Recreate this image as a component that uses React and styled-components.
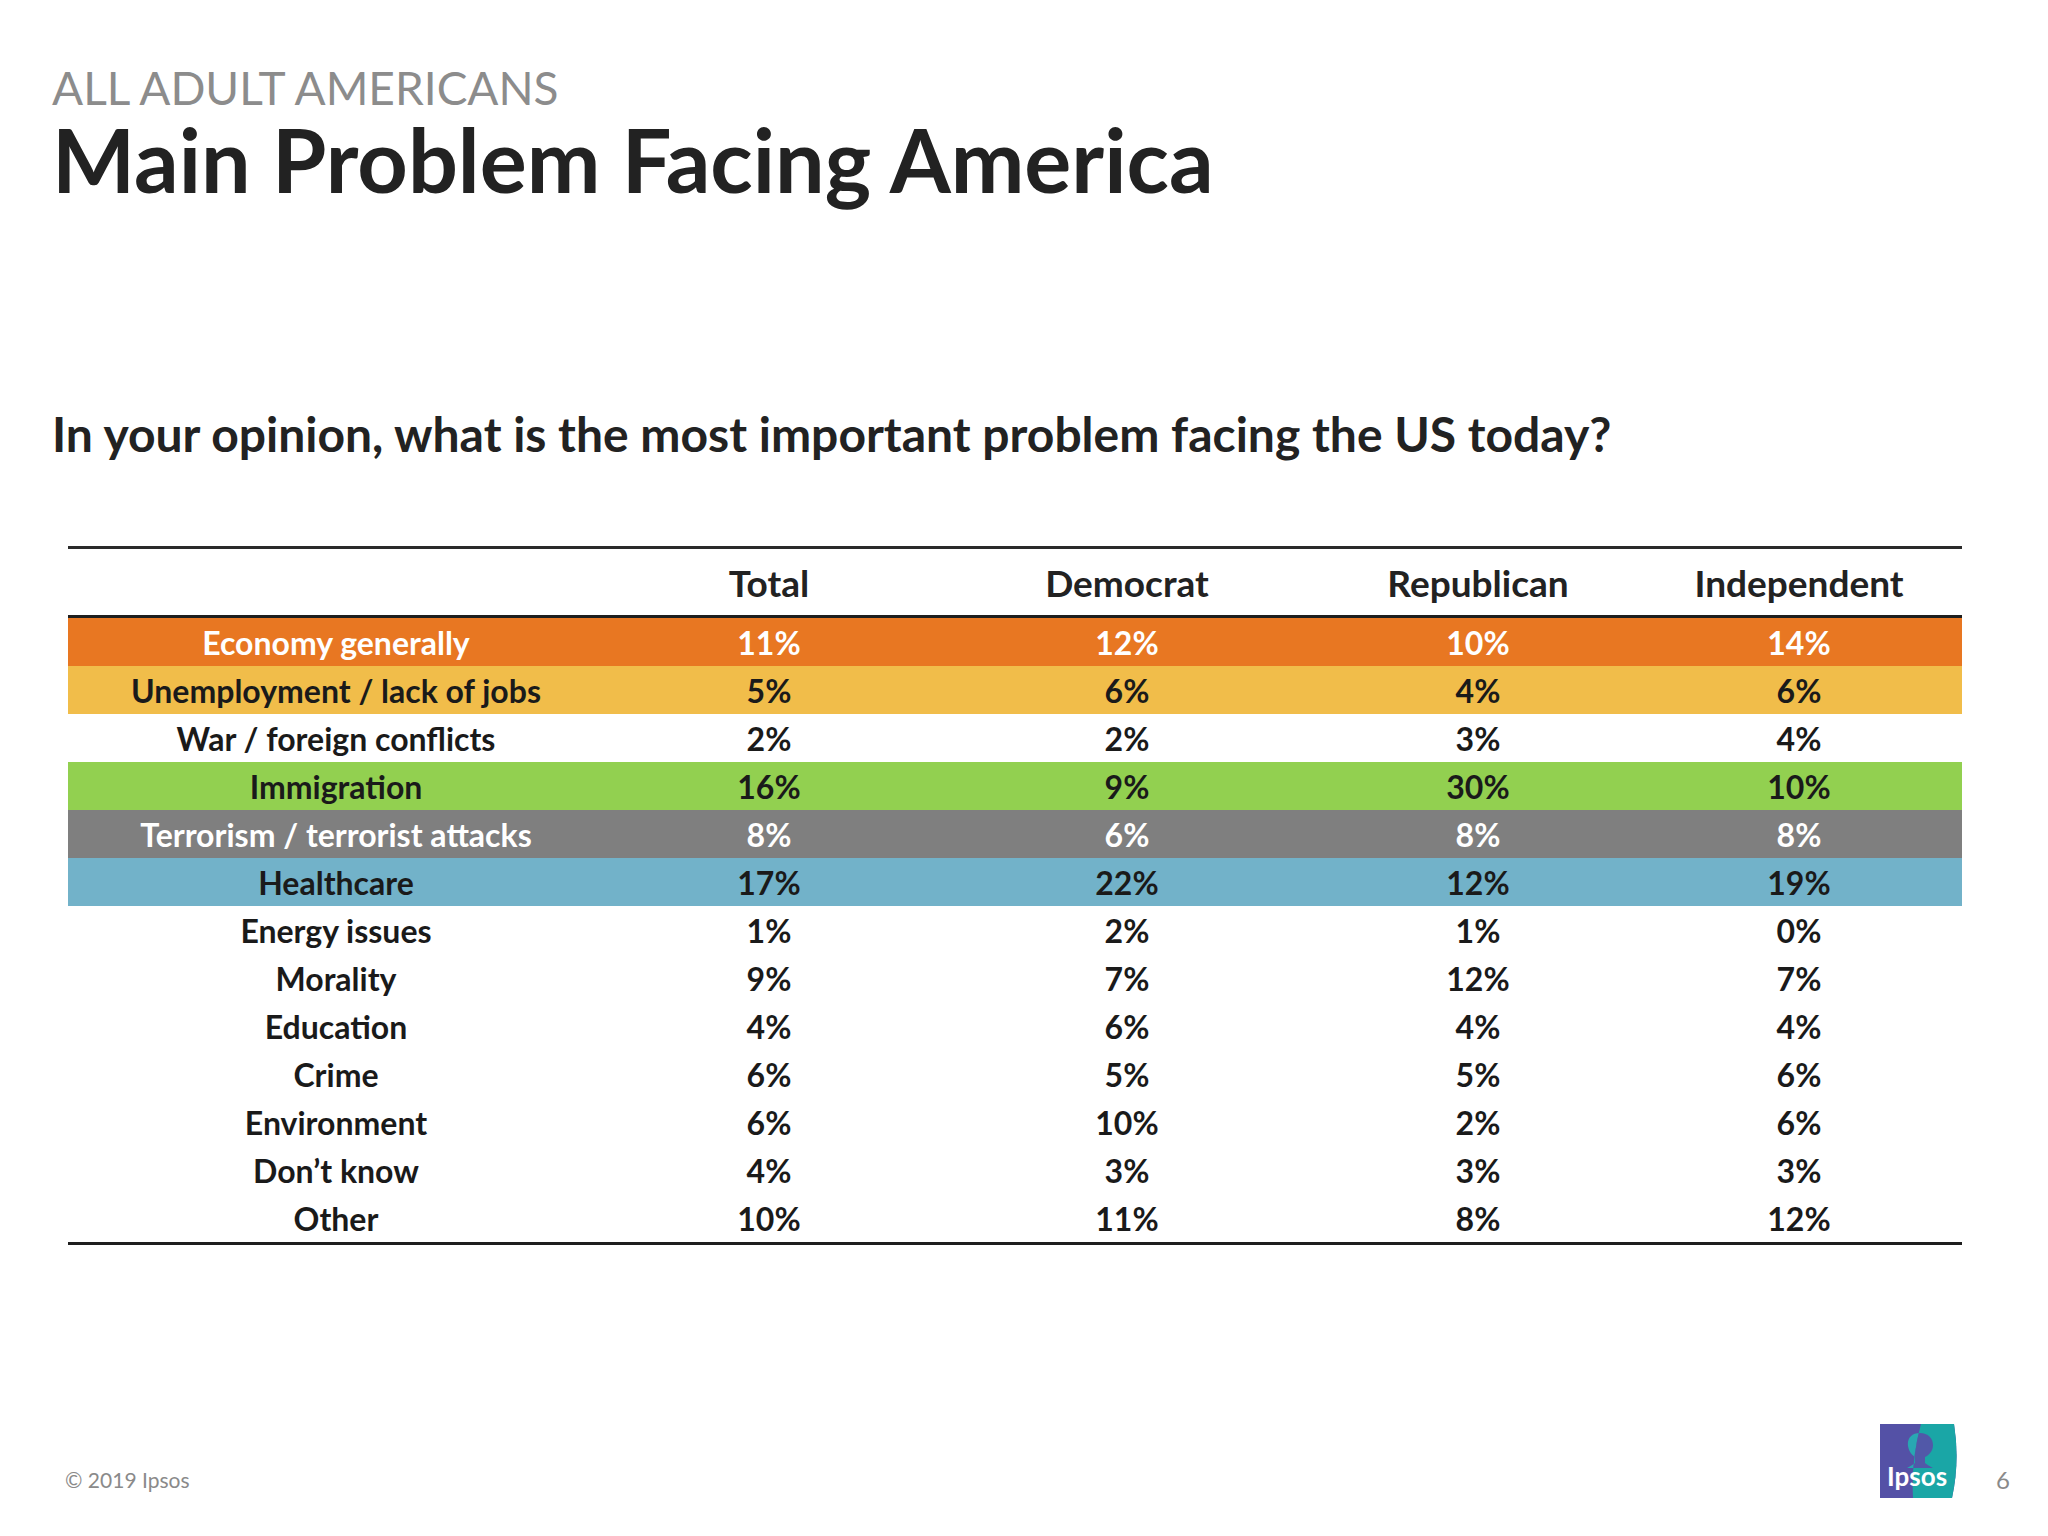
import React from "react";
import styled, { createGlobalStyle } from "styled-components";

const COLS = "536px 330px 386px 316px 326px";

const rows = [
  { label: "Economy generally", values: ["11%", "12%", "10%", "14%"], bg: "#e87722", fg: "#ffffff" },
  { label: "Unemployment / lack of jobs", values: ["5%", "6%", "4%", "6%"], bg: "#f1bd4a", fg: "#1a1a1a" },
  { label: "War / foreign conflicts", values: ["2%", "2%", "3%", "4%"] },
  { label: "Immigration", values: ["16%", "9%", "30%", "10%"], bg: "#92d050", fg: "#1a1a1a" },
  { label: "Terrorism / terrorist attacks", values: ["8%", "6%", "8%", "8%"], bg: "#7f7f7f", fg: "#ffffff" },
  { label: "Healthcare", values: ["17%", "22%", "12%", "19%"], bg: "#72b2c9", fg: "#1a1a1a" },
  { label: "Energy issues", values: ["1%", "2%", "1%", "0%"] },
  { label: "Morality", values: ["9%", "7%", "12%", "7%"] },
  { label: "Education", values: ["4%", "6%", "4%", "4%"] },
  { label: "Crime", values: ["6%", "5%", "5%", "6%"] },
  { label: "Environment", values: ["6%", "10%", "2%", "6%"] },
  { label: "Don\u2019t know", values: ["4%", "3%", "3%", "3%"] },
  { label: "Other", values: ["10%", "11%", "8%", "12%"] },
];

const HEAD =
  "M40 9 C31 9 27 15 28 22 C29 28 32 31 35 33 L35 39 C33 41 30 42 27 44 L53 44 C50 42 47 41 45 39 L45 33 C49 31 53 27 53 21 C53 14 48 9 40 9 Z";

const IpsosLogo = () => (
  <svg width="78" height="74" viewBox="0 0 78 74">
    <defs>
      <clipPath id="ipsos-left">
        <path d="M0 0 H41 Q31 36 33 74 H0 Z" />
      </clipPath>
      <clipPath id="ipsos-right">
        <path d="M41 0 H74 Q80 37 72 74 H33 Q31 36 41 0 Z" />
      </clipPath>
    </defs>
    <path d="M0 0 H74 Q80 37 72 74 H0 Z" fill="#5451a6" />
    <path d="M41 0 H74 Q80 37 72 74 H33 Q31 36 41 0 Z" fill="#1aa6a6" />
    <g clipPath="url(#ipsos-left)">
      <path d={HEAD} fill="#28a7b2" />
    </g>
    <g clipPath="url(#ipsos-right)">
      <path d={HEAD} fill="#5158a8" />
    </g>
    <text
      x="7"
      y="62"
      fontFamily="Lato, 'Open Sans', sans-serif"
      fontWeight="700"
      fontSize="26"
      fill="#ffffff"
    >
      Ipsos
    </text>
  </svg>
);

const App = () => {
  return (
    <>
      <GlobalStyle />
      <Slide>
        <Heading>
          <Kicker>ALL ADULT AMERICANS</Kicker>
          <Title>Main Problem Facing America</Title>
          <Question>
            In your opinion, what is the most important problem facing the US
            today?
          </Question>
        </Heading>
        <Table>
          <HeaderRow>
            <HeaderCell />
            <HeaderCell>Total</HeaderCell>
            <HeaderCell>Democrat</HeaderCell>
            <HeaderCell>Republican</HeaderCell>
            <HeaderCell>Independent</HeaderCell>
          </HeaderRow>
          {rows.map((row) => (
            <Row key={row.label} $bg={row.bg} $fg={row.fg}>
              <Cell>{row.label}</Cell>
              {row.values.map((v, i) => (
                <Cell key={i}>{v}</Cell>
              ))}
            </Row>
          ))}
        </Table>
        <Footer>
          <Copyright>© 2019 Ipsos</Copyright>
          <IpsosLogo />
          <PageNumber>6</PageNumber>
        </Footer>
      </Slide>
    </>
  );
};

export default App;

const GlobalStyle = createGlobalStyle`
  html, body {
    margin: 0;
    padding: 0;
    background: #ffffff;
  }
  body {
    font-family: "Lato", "Open Sans", sans-serif;
    color: #1a1a1a;
  }
`;

const Slide = styled.div`
  width: 2048px;
  height: 1536px;
  box-sizing: border-box;
  display: flex;
  flex-direction: column;
  background: #ffffff;
  overflow: hidden;
`;

const Heading = styled.div`
  padding: 64px 0 0 52px;
  display: flex;
  flex-direction: column;
`;

const Kicker = styled.div`
  font-size: 46px;
  line-height: 47px;
  font-weight: 400;
  color: #8c8c8c;
`;

const Title = styled.h1`
  margin: 4px 0 0;
  font-size: 88px;
  line-height: 88px;
  font-weight: 700;
  color: #222222;
`;

const Question = styled.h2`
  margin: 207px 0 0;
  font-size: 48px;
  line-height: 48px;
  font-weight: 700;
  color: #222222;
`;

const Table = styled.div`
  margin: 88px 0 0 68px;
  width: 1894px;
  border-top: 3px solid #2a2a2a;
  border-bottom: 3px solid #1e1e1e;
`;

const HeaderRow = styled.div`
  display: grid;
  grid-template-columns: ${COLS};
  height: 66px;
  align-items: center;
  border-bottom: 3px solid #1e1e1e;
`;

const HeaderCell = styled.div`
  text-align: center;
  font-size: 37px;
  font-weight: 700;
  color: #222222;
`;

const Row = styled.div`
  display: grid;
  grid-template-columns: ${COLS};
  height: 48px;
  align-items: center;
  background: ${(p) => p.$bg || "transparent"};
  color: ${(p) => p.$fg || "#1a1a1a"};
`;

const Cell = styled.div`
  text-align: center;
  font-size: 32px;
  font-weight: 700;
`;

const Footer = styled.div`
  margin-top: auto;
  display: flex;
  align-items: flex-end;
  padding: 0 38px 38px 65px;
`;

const Copyright = styled.div`
  flex: 1;
  font-size: 21px;
  line-height: 24px;
  margin-bottom: 6px;
  color: #8a8a8a;
`;

const PageNumber = styled.div`
  margin-left: 38px;
  font-size: 24px;
  line-height: 28px;
  margin-bottom: 4px;
  color: #8a8a8a;
`;
